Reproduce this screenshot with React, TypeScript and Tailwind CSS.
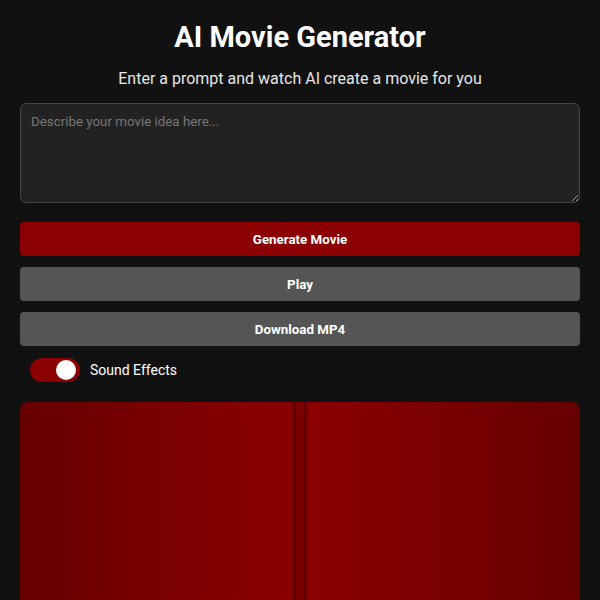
import { useState } from 'react'

export default function App() {
  const [sound, setSound] = useState(true)

  return (
    <div className="min-h-screen bg-[#111111] px-5 pt-5 font-['Roboto',sans-serif] text-white">
      <h1 className="text-center text-[29px] font-bold leading-[34px]">AI Movie Generator</h1>
      <p className="mt-[15px] text-center text-[16px] leading-[20px] text-[#e6e6e6]">
        Enter a prompt and watch AI create a movie for you
      </p>

      <textarea
        placeholder="Describe your movie idea here..."
        className="mt-[14px] block h-[100px] w-full rounded-md border border-[#444] bg-[#222] px-[10px] py-[8px] text-[13.333px] text-white placeholder:text-[#777] focus:outline-none"
      />

      <div className="mt-[19px] flex flex-col gap-[11px]">
        <button className="h-[34px] w-full rounded bg-[#8b0000] pt-px text-[13.333px] font-bold">Generate Movie</button>
        <button className="h-[34px] w-full rounded bg-[#555] pt-px text-[13.333px] font-bold">Play</button>
        <button className="h-[34px] w-full rounded bg-[#555] pt-px text-[13.333px] font-bold">Download MP4</button>
      </div>

      <label className="mt-[12px] ml-[10px] flex items-center gap-[10px]">
        <button
          onClick={() => setSound(!sound)}
          className={`flex h-[24px] w-[50px] items-center rounded-full p-[2px] ${sound ? 'justify-end bg-[#8b0000]' : 'justify-start bg-[#555]'}`}
        >
          <span className="mr-[2px] h-[20px] w-[20px] rounded-full bg-white" />
        </button>
        <span className="text-[14px]">Sound Effects</span>
      </label>

      <div className="mt-[20px] flex h-[300px] overflow-hidden rounded-lg">
        <div className="flex-1 bg-gradient-to-r from-[#660000] via-[#7a0000] to-[#8b0000]" />
        <div className="w-[4px] bg-gradient-to-r from-[#7a0000] to-[#550000]" />
        <div className="w-[8px] bg-[#7a0000]" />
        <div className="w-[4px] bg-gradient-to-r from-[#550000] to-[#800000]" />
        <div className="flex-1 bg-gradient-to-r from-[#8b0000] via-[#7a0000] to-[#660000]" />
      </div>
    </div>
  )
}
